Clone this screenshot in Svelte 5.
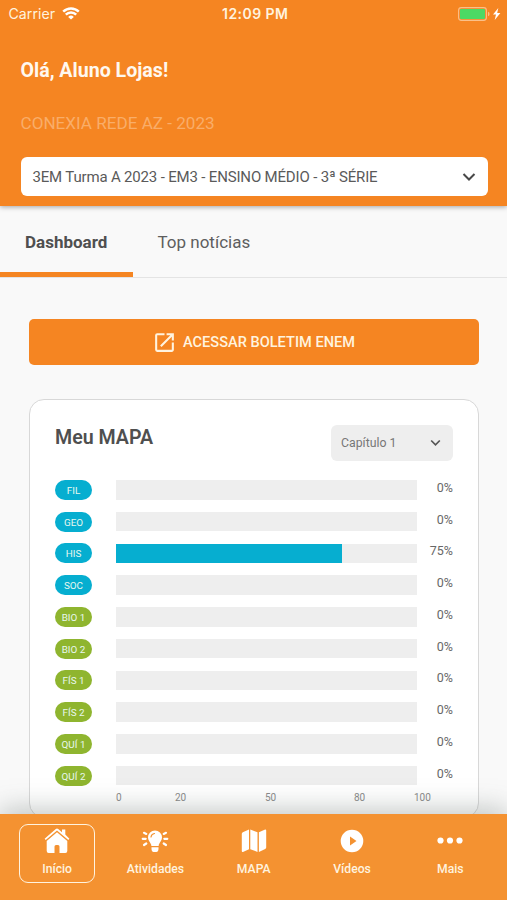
<script>
  const subjects = [
    { name: 'FIL', value: 0, area: 'human' },
    { name: 'GEO', value: 0, area: 'human' },
    { name: 'HIS', value: 75, area: 'human' },
    { name: 'SOC', value: 0, area: 'human' },
    { name: 'BIO 1', value: 0, area: 'nature' },
    { name: 'BIO 2', value: 0, area: 'nature' },
    { name: 'FÍS 1', value: 0, area: 'nature' },
    { name: 'FÍS 2', value: 0, area: 'nature' },
    { name: 'QUÍ 1', value: 0, area: 'nature' },
    { name: 'QUÍ 2', value: 0, area: 'nature' }
  ];
  const nav = ['Início', 'Atividades', 'MAPA', 'Vídeos', 'Mais'];
</script>

<div class="app">
  <header>
    <div class="status">
      <div class="carrier">
        <span>Carrier</span>
        <svg width="18" height="13" viewBox="0 0 18 13" fill="none" stroke="#fff" stroke-width="2.4">
          <path d="M1.2 4.7a11 11 0 0 1 15.6 0M3.800 7.700a7.300 7.300 0 0 1 10.400 0" />
          <path d="M9 12.600 6.200 9.900a4 4 0 0 1 5.600 0z" fill="#fff" stroke="none" />
        </svg>
      </div>
      <span class="time">12:09 PM</span>
      <svg class="battery" width="44" height="14" viewBox="0 0 44 14">
        <rect x=".6" y=".6" width="27.8" height="12.8" rx="2.8" fill="none" stroke="#fbc089" stroke-width="1.1" />
        <rect x="2" y="2" width="25" height="10" rx="1" fill="#4cd964" />
        <path d="M30 4.8q1.6.5 1.6 2.2T30 9.2z" fill="#fbc089" />
        <path d="M40.3 1 35 7.6h3L36.7 13 42.4 6h-3.2z" fill="#fff" />
      </svg>
    </div>
    <h1>Olá, Aluno Lojas!</h1>
    <p class="school">CONEXIA REDE AZ - 2023</p>
    <div class="class-select">
      <span>3EM Turma A 2023 - EM3 - ENSINO MÉDIO - 3ª SÉRIE</span>
      <svg width="14" height="10" viewBox="0 0 14 10" fill="none" stroke="#484848" stroke-width="2"><path d="m1.5 2 5.5 5.5L12.500 2" /></svg>
    </div>
  </header>

  <div class="tabs">
    <div class="tab active">Dashboard</div>
    <div class="tab">Top notícias</div>
  </div>

  <main>
    <button class="report">
      <svg width="25" height="25" viewBox="0 0 24 24" fill="#fff3df"><path d="M19 19H5V5h7V3H5a2 2 0 0 0-2 2v14a2 2 0 0 0 2 2h14c1.100 0 2-.9 2-2v-7h-2v7zM14 3v2h3.590l-9.830 9.830 1.410 1.410L19 6.410V10h2V3h-7z" /></svg>
      <span>ACESSAR BOLETIM ENEM</span>
    </button>

    <section class="card">
      <div class="card-head">
        <h2>Meu MAPA</h2>
        <div class="chapter">
          <span>Capítulo 1</span>
          <svg width="11" height="8" viewBox="0 0 11 8" fill="none" stroke="#555" stroke-width="1.7"><path d="m1.200 1.500 4.300 4.300 4.300-4.300" /></svg>
        </div>
      </div>
      <div class="rows">
        {#each subjects as s}
          <div class="row">
            <span class="pill {s.area}">{s.name}</span>
            <div class="track"><div class="fill" style="width: {s.value}%"></div></div>
            <span class="pct">{s.value}%</span>
          </div>
        {/each}
      </div>
      <div class="axis">
        <span>0</span><span>20</span><span>50</span><span>80</span><span>100</span>
      </div>
    </section>
  </main>

  <nav>
    {#each nav as label, i}
      <div class="item" class:current={i === 0}>
        <svg width="28" height="26" viewBox="0 0 28 26" fill="#fff">
          {#if i === 0}
            <path d="m14 4.300 10.300 8.700V23a2 2 0 0 1-2 2h-5.800v-6.500a1.500 1.500 0 0 0-1.500-1.500h-2a1.500 1.500 0 0 0-1.500 1.500V25H5.700a2 2 0 0 1-2-2V13z" />
            <path d="M19 1.500h3.300v5L26.400 10.700l-1.100 1.300L14 2.600 2.700 12l-1.100-1.300L12.800.9q1.200-1 2.400 0L19 4.200z" />
          {:else if i === 1}
            <path d="M14 2.500a7 7 0 0 0-7 7c0 3 2.200 4.600 3.300 7.500v1h7.400v-1C18.800 14.100 21 12.500 21 9.500a7 7 0 0 0-7-7zM10.500 19.200h7V21q-.2 3-2.200 3h-2.600q-2 0-2.200-3z" />
            <path d="M10 9a4 4 0 0 1 3.500-3.500" fill="none" stroke="#f49231" stroke-width="1.2" stroke-linecap="round" />
            <path d="M1.700 10.800h3M23.300 10.800h3M3 4.800l2.300 1.100M25 4.800l-2.300 1.100M3 17l2.300-1.500M25 17l-2.300-1.500" fill="none" stroke="#fff" stroke-width="2.200" stroke-linecap="round" />
          {:else if i === 2}
            <path d="M1.800 5.800q0-1 1-1.500L9 1.500v19.700l-5.500 2.500q-1.700.7-1.700-.8zM10.300 1.500l7.200 2.700v19.700l-7.200-2.700zM18.900 4.200l5.700-2.500q1.600-.6 1.600.9v17q0 1-1 1.400l-6.300 2.900z" />
          {:else if i === 3}
            <path fill-rule="evenodd" d="M14 1.700a11.300 11.300 0 1 0 0 22.600 11.300 11.300 0 1 0 0-22.600zM12 8.500v9l6.500-4.500z" />
          {:else}
            <circle cx="4.500" cy="12.500" r="3.100" /><circle cx="14" cy="12.500" r="3.100" /><circle cx="23.500" cy="12.500" r="3.100" />
          {/if}
        </svg>
        <span>{label}</span>
      </div>
    {/each}
  </nav>
</div>

<style>
  .app {
    width: 507px;
    height: 900px;
    display: flex;
    flex-direction: column;
    overflow: hidden;
    background: #f9f9f9;
    font-family: Roboto, 'Liberation Sans', sans-serif;
    color: #4f4f4f;
    box-sizing: border-box;
  }
  .app :global(*) { box-sizing: border-box; }
  svg { display: block; flex: none; }
  span { white-space: nowrap; }
  header {
    height: 206px;
    flex: none;
    padding: 0 19.500px 0 20.500px;
    background: #f58522;
    box-shadow: 0 1px 5px rgba(0, 0, 0, 0.35);
    z-index: 1;
  }
  .status {
    height: 27px;
    margin: 0 -17px 0 -12px;
    padding-right: 2.500px;
    display: grid;
    grid-template-columns: 1fr auto 1fr;
    align-items: center;
    font-family: Inter, Roboto, sans-serif;
    color: #fff3df;
  }
  .carrier { display: flex; align-items: center; gap: 7px; font-size: 14.200px; }
  .time { font-size: 14px; font-weight: 600; letter-spacing: 0.450px; }
  .battery { justify-self: end; }
  h1 { margin: 31px 0 0; font-size: 19.600px; line-height: 26px; font-weight: 700; color: #fff8ef; }
  .school { margin: 27px 0 0; font-size: 17.100px; line-height: 24px; color: #f9ad69; }
  .class-select {
    height: 39px;
    width: 467px;
    margin-top: 22px;
    padding: 0 12px;
    display: flex;
    align-items: center;
    justify-content: space-between;
    background: #fff;
    border-radius: 6px;
    font-size: 15px;
    letter-spacing: -0.170px;
    color: #5a5a5a;
  }
  .tabs {
    height: 72px;
    flex: none;
    display: flex;
    border-bottom: 1px solid #e4e4e4;
    font-size: 17px;
  }
  .tab { height: 71px; padding: 0 24.500px; line-height: 72px; color: #5e5e5e; }
  .active { width: 133px; padding-left: 25px; font-weight: 700; color: #4f4f4f; border-bottom: 5px solid #f58522; }
  main { height: 536px; flex: none; padding: 41px 28px 0 29px; }
  .report {
    width: 100%;
    height: 46px;
    border: 0;
    border-radius: 5px;
    background: #f58522;
    color: #fff3df;
    display: flex;
    align-items: center;
    justify-content: center;
    gap: 6px;
    font: 500 14.600px Roboto, sans-serif;
  }
  .report svg { margin-left: -1px; }
  .card {
    height: 419px;
    margin-top: 34px;
    padding: 25px 25px 0;
    border: 1.500px solid #d8d8d8;
    border-radius: 15px;
    background: #fff;
  }
  .card-head { display: flex; justify-content: space-between; }
  h2 { margin: 0; font-size: 19.600px; line-height: 25px; font-weight: 600; }
  .chapter {
    width: 122px;
    height: 36px;
    padding: 0 12px 0 10px;
    display: flex;
    align-items: center;
    justify-content: space-between;
    border-radius: 6px;
    background: #eee;
    color: #777;
    font-size: 12.300px;
    line-height: 14px;
  }
  .chapter span { margin-top: -1px; }
  .rows { margin-top: 19px; display: flex; flex-direction: column; gap: 12.280px; }
  .row { height: 19.500px; display: flex; align-items: center; }
  .pill {
    width: 37px;
    height: 20px;
    border-radius: 10px;
    color: #e8f8ef;
    font-size: 9.900px;
    line-height: 21px;
    text-align: center;
  }
  .human { background: #06aed0; }
  .nature { background: #8fb52f; }
  .track { width: 301px; height: 19.500px; margin-left: 24px; background: #eee; }
  .fill { height: 100%; background: #06aed0; }
  .pct { flex: 1; text-align: right; font-size: 12.500px; padding-bottom: 5px; color: #686868; }
  .axis {
    width: 315px;
    margin: 5.500px 0 0 61px;
    display: grid;
    grid-template-columns: 59px 90px 89px 60px auto;
    font-size: 10px;
    line-height: 14px;
    color: #8b8b8b;
  }
  nav {
    height: 86px;
    flex: none;
    padding: 10px 7.500px 0 8px;
    display: flex;
    background: #f49231;
    box-shadow: 0 -4px 26px rgba(80, 95, 90, 0.36);
    z-index: 1;
    color: #fff3df;
    font-size: 12.200px;
    font-weight: 500;
  }
  .item {
    flex: 1;
    height: 59px;
    padding-top: 3px;
    margin: 0 11px;
    display: flex;
    flex-direction: column;
    align-items: center;
    gap: 8px;
    border: 1.500px solid transparent;
    border-radius: 9px;
    line-height: 15px;
  }
  .current { border-color: #fff3df; }
</style>
